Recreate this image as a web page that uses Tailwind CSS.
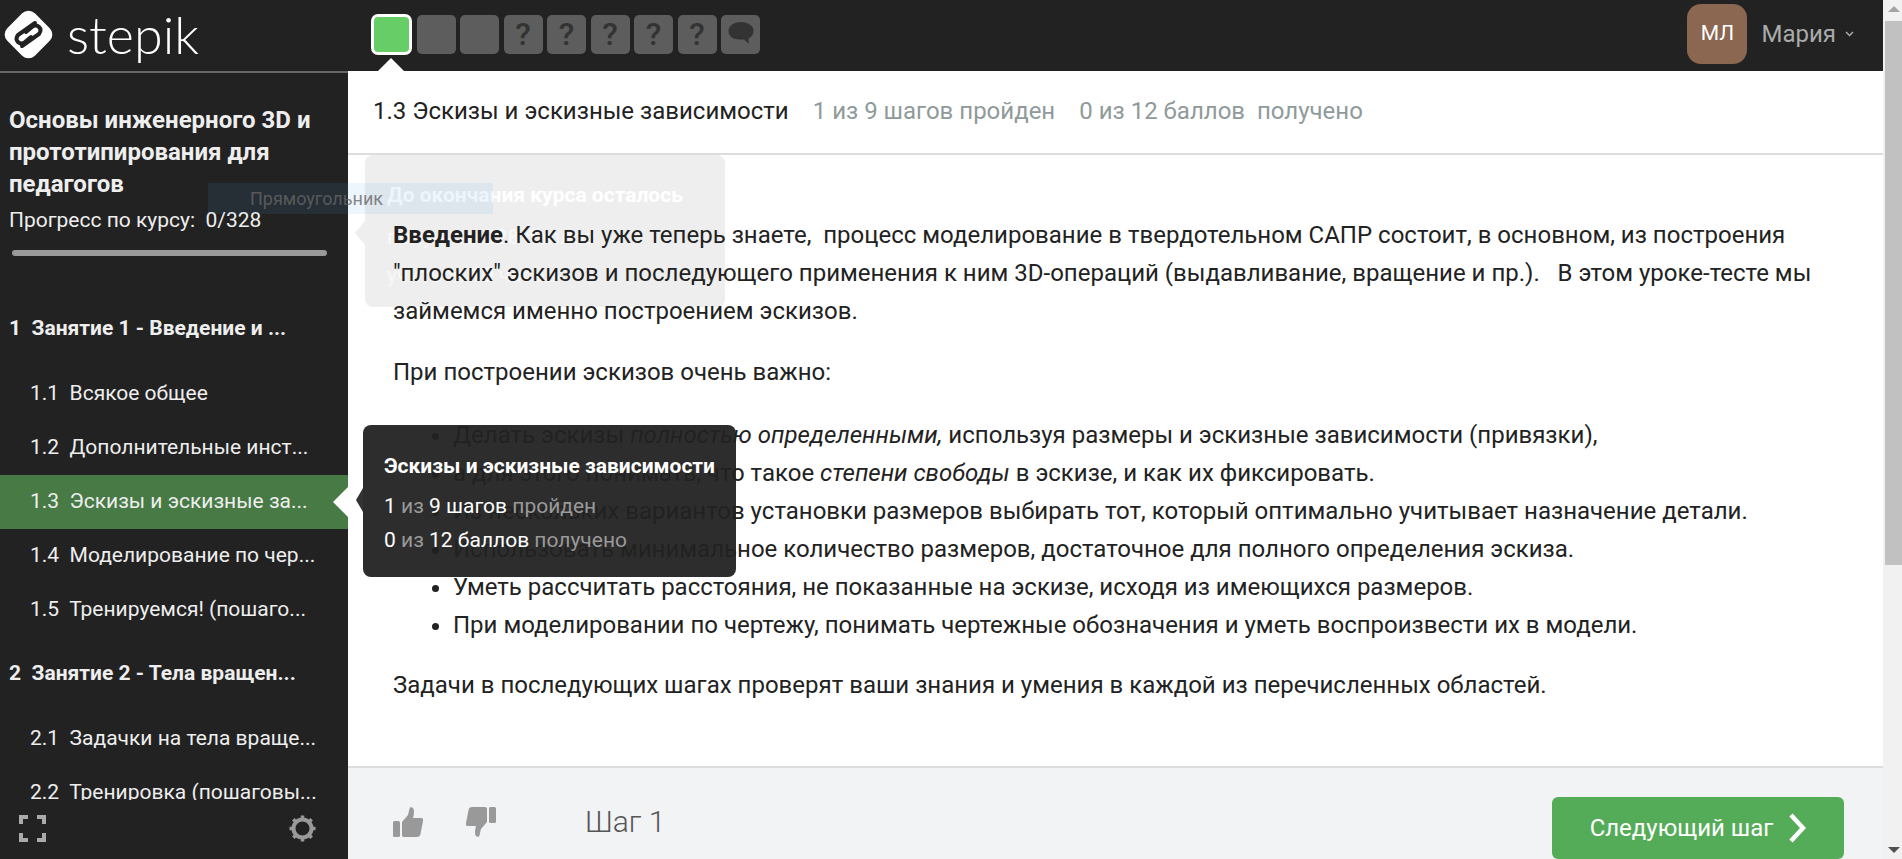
<!DOCTYPE html>
<html lang="ru">
<head>
    <meta charset="UTF-8">
    <title>Stepik</title>
    <script src="https://cdn.jsdelivr.net/npm/@tailwindcss/browser@4"></script>
</head>
<body class="relative flex h-[859px] overflow-hidden bg-white font-['Roboto',sans-serif] text-[24px] text-[#222]">
    <div class="flex min-w-0 flex-1 flex-col">
        <!-- Верхняя панель -->
        <header class="relative flex h-[71px] shrink-0 items-center bg-[#222] pb-[3px]">
            <div class="flex w-[371px] shrink-0 items-center pl-[4px]">
                <svg class="h-[49px] w-[49px]" viewBox="0 0 49 49">
                    <rect x="5" y="5" width="39" height="39" rx="9" transform="rotate(45 24.5 24.5)" fill="#fff"/>
                    <path d="M31 13L14 25Q11 29 14 32Q17 35 21 32L27 27" fill="none" stroke="#222" stroke-width="4" stroke-linecap="round"/>
                    <path d="M18 36L35 24Q38 20 35 17Q32 14 28 17L22 22" fill="none" stroke="#222" stroke-width="4" stroke-linecap="round"/>
                </svg>
                <span class="ml-[14px] font-['Lato',sans-serif] text-[52px] leading-none font-light text-white">stepik</span>
            </div>
            <!-- Шаги урока -->
            <div class="flex items-center gap-[4.5px]">
                <div class="h-[41px] w-[41px] rounded-[7px] border-[3px] border-white bg-[#67ce67]"></div>
                <div class="h-[39px] w-[39px] rounded-[5px] bg-[#5d5d5d]"></div>
                <div class="h-[39px] w-[39px] rounded-[5px] bg-[#5d5d5d]"></div>
                <div class="flex h-[39px] w-[39px] items-center justify-center rounded-[5px] bg-[#5d5d5d] text-[32px] leading-none font-medium text-[#333]">?</div>
                <div class="flex h-[39px] w-[39px] items-center justify-center rounded-[5px] bg-[#5d5d5d] text-[32px] leading-none font-medium text-[#333]">?</div>
                <div class="flex h-[39px] w-[39px] items-center justify-center rounded-[5px] bg-[#5d5d5d] text-[32px] leading-none font-medium text-[#333]">?</div>
                <div class="flex h-[39px] w-[39px] items-center justify-center rounded-[5px] bg-[#5d5d5d] text-[32px] leading-none font-medium text-[#333]">?</div>
                <div class="flex h-[39px] w-[39px] items-center justify-center rounded-[5px] bg-[#5d5d5d] text-[32px] leading-none font-medium text-[#333]">?</div>
                <div class="flex h-[39px] w-[39px] items-center justify-center rounded-[5px] bg-[#5d5d5d]">
                    <svg class="h-[30px] w-[30px]" viewBox="0 0 30 30"><path d="M15 3C8 3 2.500 6.500 2.500 12C2.500 17 7 20.500 13.500 20.500C15 20.500 16 20.500 18 20.500L23 25L22.500 19.500C25.500 18 27.500 15.500 27.500 12C27.500 6.500 22 3 15 3Z" fill="#333"/></svg>
                </div>
            </div>
            <div class="absolute top-[58px] left-[378px] h-0 w-0 border-x-[13px] border-b-[13px] border-x-transparent border-b-white"></div>
            <!-- Пользователь -->
            <div class="ml-auto flex items-center pr-[29px]">
                <div class="flex h-[60px] w-[60px] items-center justify-center rounded-[14px] bg-[#8b6651] text-[21px] text-white">МЛ</div>
                <span class="ml-[14px] text-[24px] text-[#aaa]">Мария</span>
                <svg class="ml-[9px] h-[6px] w-[9px]" viewBox="0 0 9 6"><path d="M1 1L4.500 4.500L8 1" fill="none" stroke="#aaa" stroke-width="1.500"/></svg>
            </div>
        </header>

        <div class="flex min-h-0 flex-1">
            <!-- Боковое меню -->
            <aside class="relative flex w-[348px] shrink-0 flex-col overflow-hidden border-t-2 border-[#666] bg-[#222] text-[21px] text-[#eee]">
                <div class="pt-[31px] pl-[9px]">
                    <h1 class="text-[24px] leading-[32px] font-bold text-[#eee]">Основы инженерного 3D и<br>прототипирования для<br>педагогов</h1>
                    <p class="mt-[5px] leading-[31px]">Прогресс по курсу:&nbsp; 0/328</p>
                </div>
                <div class="mt-[14px] ml-[12px] h-[6px] w-[315px] shrink-0 rounded-full bg-[#999]"></div>
                <div class="mt-[46px] flex h-[54px] shrink-0 items-center pl-[9px] font-bold whitespace-pre">1&nbsp; Занятие 1 - Введение и ...</div>
                <div class="mt-[11px] flex h-[54px] shrink-0 items-center pl-[30px] whitespace-pre">1.1&nbsp; Всякое общее</div>
                <div class="flex h-[54px] shrink-0 items-center pl-[30px] whitespace-pre">1.2&nbsp; Дополнительные инст...</div>
                <div class="relative flex h-[54px] shrink-0 items-center bg-[#477a45] pl-[30px] whitespace-pre">1.3&nbsp; Эскизы и эскизные за...<div class="absolute top-[12px] right-0 h-0 w-0 border-y-[15px] border-r-[15px] border-y-transparent border-r-white"></div></div>
                <div class="flex h-[54px] shrink-0 items-center pl-[30px] whitespace-pre">1.4&nbsp; Моделирование по чер...</div>
                <div class="flex h-[54px] shrink-0 items-center pl-[30px] whitespace-pre">1.5&nbsp; Тренируемся! (пошаго...</div>
                <div class="mt-[10px] flex h-[54px] shrink-0 items-center pl-[9px] font-bold whitespace-pre">2&nbsp; Занятие 2 - Тела вращен...</div>
                <div class="mt-[11px] flex h-[54px] shrink-0 items-center pl-[30px] whitespace-pre">2.1&nbsp; Задачки на тела враще...</div>
                <div class="flex h-[54px] shrink-0 items-center pl-[30px] whitespace-pre">2.2&nbsp; Тренировка (пошаговы...</div>
                <!-- Нижние иконки поверх списка -->
                <div class="absolute inset-x-0 bottom-0 flex h-[59px] items-start justify-between bg-[#222] pt-[15px] pr-[32px] pl-[19px]">
                    <svg class="h-[27px] w-[27px]" viewBox="0 0 27 27"><path d="M2 9V2H9M18 2H25V9M25 18V25H18M9 25H2V18" fill="none" stroke="#aaa" stroke-width="4"/></svg>
                    <svg class="h-[27px] w-[27px]" viewBox="0 0 27 27">
                        <circle cx="13.500" cy="13.500" r="9" fill="none" stroke="#999" stroke-width="4"/>
                        <path d="M13.500 0.500V5M13.500 22V26.500M0.500 13.500H5M22 13.500H26.500M4.300 4.300L7.500 7.500M19.500 19.500L22.700 22.700M22.700 4.300L19.500 7.500M7.500 19.500L4.300 22.700" stroke="#999" stroke-width="3.500"/>
                    </svg>
                </div>
            </aside>

            <!-- Основная часть -->
            <main class="relative flex min-w-0 flex-1 flex-col">
                <div class="flex h-[84px] shrink-0 items-center border-b-2 border-[#ddd] pb-[2px] pl-[25px] whitespace-pre">
                    <span>1.3 Эскизы и эскизные зависимости</span>
                    <span class="ml-[24px] text-[#8f9a9a]">1 из 9 шагов пройден</span>
                    <span class="ml-[24px] text-[#8f9a9a]">0 из 12 баллов  получено</span>
                </div>
                <div class="relative flex-1 pt-[61px] pr-[70px] pl-[45px] leading-[38px]">
                    <p class="relative z-10"><b>Введение</b>. Как вы уже теперь знаете,&nbsp; процесс моделирование в твердотельном САПР состоит, в основном, из построения "плоских" эскизов и последующего применения к ним 3D-операций (выдавливание, вращение и пр.). &nbsp; В этом уроке-тесте мы займемся именно построением эскизов.</p>
                    <p class="mt-[23px]">При построении эскизов очень важно:</p>
                    <ul class="mt-[25px] list-disc pl-[60px]">
                        <li>Делать эскизы <i>полностью определенными,</i> используя размеры и эскизные зависимости (привязки),</li>
                        <li>а для этого понимать, что такое <i>степени свободы</i> в эскизе, и как их фиксировать.</li>
                        <li>Из нескольких вариантов установки размеров выбирать тот, который оптимально учитывает назначение детали.</li>
                        <li>Использовать минимальное количество размеров, достаточное для полного определения эскиза.</li>
                        <li>Уметь рассчитать расстояния, не показанные на эскизе, исходя из имеющихся размеров.</li>
                        <li>При моделировании по чертежу, понимать чертежные обозначения и уметь воспроизвести их в модели.</li>
                    </ul>
                    <p class="mt-[22px]">Задачи в последующих шагах проверят ваши знания и умения в каждой из перечисленных областей.</p>
                </div>
                <!-- Нижняя панель шага -->
                <div class="relative flex h-[93px] shrink-0 border-t-2 border-[#ddd] bg-[#f2f3f5] pr-[39px] pl-[45px]">
                    <div class="flex items-center gap-[43px] pt-[16px]">
                        <svg class="h-[30px] w-[30px]" viewBox="0 0 30 30" fill="#999"><rect x="0" y="14" width="7" height="16" rx="1.500"/><path d="M9 15L15 8C16 5 16 2 17 0.500C19 -0.500 21 1 21 4C21 7 20.500 9 20 11H28C30 11 30.500 12.500 30 14L27.500 27C27 29 26 30 24 30H11C9.500 30 9 29 9 28Z"/></svg>
                        <svg class="h-[30px] w-[30px]" viewBox="0 0 30 30" fill="#999"><rect x="23" y="0" width="7" height="16" rx="1.500"/><path d="M21 15L15 22C14 25 14 28 13 29.500C11 30.500 9 29 9 26C9 23 9.500 21 10 19H2C0 19 -0.500 17.500 0 16L2.500 3C3 1 4 0 6 0H19C20.500 0 21 1 21 2Z"/></svg>
                    </div>
                    <div class="ml-[89px] flex items-center pt-[16px] text-[30px] font-light text-[#555]">Шаг 1</div>
                    <div class="ml-auto flex h-[62px] w-[292px] items-center justify-center self-end rounded-[6px] bg-[#55ac58] text-[24px] text-white">
                        Следующий шаг
                        <svg class="ml-[15px] h-[30px] w-[18px]" viewBox="0 0 18 30"><path d="M3 2L15 15L3 28" fill="none" stroke="#fff" stroke-width="4.500"/></svg>
                    </div>
                </div>
            </main>
        </div>
    </div>

    <!-- Полоса прокрутки -->
    <div class="relative w-[19px] shrink-0 bg-[#f1f1f1]">
        <div class="absolute top-[6px] left-[5px] h-0 w-0 border-x-[6px] border-b-[6px] border-x-transparent border-b-[#a3a3a3]"></div>
        <div class="absolute top-[21px] right-0 h-[544px] w-[17px] bg-[#c1c1c1]"></div>
        <div class="absolute bottom-[6px] left-[5px] h-0 w-0 border-x-[6px] border-t-[6px] border-x-transparent border-t-[#505050]"></div>
    </div>

    <!-- Всплывающая подсказка курса (полупрозрачная) -->
    <div class="absolute top-[155px] left-[365px] h-[152px] w-[360px] rounded-[8px] bg-[#eee] pt-[21px] pl-[22px] text-[21px] leading-[38px] text-white">
        <div class="font-bold">До окончания курса осталось</div>
        <div class="mt-[4px] text-white/60">получить <b>328</b> баллов</div>
        <div class="text-white/60">учиться <b>10</b> часов</div>
    </div>
    <div class="absolute top-[221px] left-[355px] h-0 w-0 border-y-[12px] border-r-[10px] border-y-transparent border-r-[#eee]"></div>

    <!-- Метка «Прямоугольник» -->
    <div class="absolute top-[183px] left-[208px] z-20 flex h-[31px] w-[285px] items-center bg-[#4a9be8]/10 pl-[42px] text-[18px] text-[#666]/80">Прямоугольник</div>

    <!-- Подсказка урока -->
    <div class="absolute top-[425px] left-[363px] z-20 h-[152px] w-[373px] rounded-[8px] bg-[#222]/95 pt-[25px] pl-[21px] text-[21px] leading-[32px] text-white">
        <div class="font-bold">Эскизы и эскизные зависимости</div>
        <div class="mt-[8px]">1 <span class="text-[#999]">из</span> 9 шагов <span class="text-[#999]">пройден</span></div>
        <div class="mt-[2px]">0 <span class="text-[#999]">из</span> 12 баллов <span class="text-[#999]">получено</span></div>
    </div>
    <div class="absolute top-[488px] left-[356px] z-20 h-0 w-0 border-y-[12px] border-r-[7px] border-y-transparent border-r-[#333]"></div>
</body>
</html>
